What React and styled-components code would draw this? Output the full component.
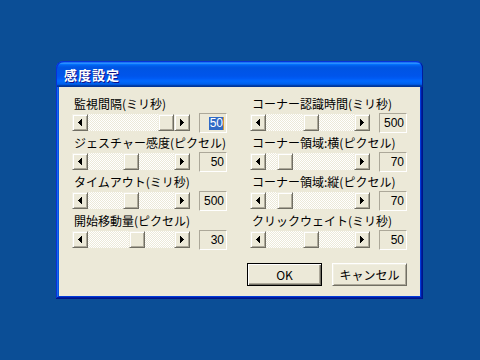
import styled, { createGlobalStyle } from 'styled-components';

const GlobalStyle = createGlobalStyle`
  html, body { margin: 0; padding: 0; }
  body {
    background: #0b4e96;
    font-family: "Noto Sans CJK JP", "Noto Sans", sans-serif;
  }
`;

const Desktop = styled.div`
  width: 480px;
  height: 360px;
  box-sizing: border-box;
  padding: 61px 0 0 56px;
`;

const Window = styled.div`
  width: 367px;
  height: 238px;
  display: flex;
  flex-direction: column;
  box-sizing: border-box;
  padding: 0 3px 3px;
  background: #0054e3;
  border-radius: 8px 8px 0 0;
  box-shadow: inset -1px -1px #00138c, inset 1px 1px #0831d9,
    inset -2px -2px #001ea0, inset 2px 2px #166aee,
    inset -3px -3px #003bda, inset 3px 3px #0855dd;
`;

const TitleBar = styled.div`
  height: 26px;
  margin: 0 -3px;
  box-sizing: border-box;
  display: flex;
  align-items: center;
  padding: 0 0 1px 7px;
  border-radius: 8px 7px 0 0;
  border-top: 1px solid #0831d9;
  border-left: 1px solid #0831d9;
  border-right: 1px solid #001ea0;
  background: linear-gradient(
    to bottom,
    #0058ee 0%, #3593ff 4%, #288eff 6%, #127dff 8%, #036ffc 10%,
    #0262ee 14%, #0057e5 20%, #0054e3 24%, #0055eb 56%, #005bf5 66%,
    #026afe 76%, #0062ef 86%, #0052d6 92%, #0040ab 94%, #003092 100%
  );
  color: #fff;
  font-size: 13px;
  font-weight: bold;
  letter-spacing: 1px;
  text-shadow: 1px 1px #0f1089;
`;

const Client = styled.div`
  flex: 1;
  background: #ece9d8;
  box-sizing: border-box;
  padding: 9px 13px 0 13px;
  display: grid;
  grid-template-columns: 155px 157px;
  column-gap: 23px;
  row-gap: 2px;
  align-content: start;
`;

const Field = styled.div`
  display: flex;
  flex-direction: column;
`;

const Label = styled.div`
  height: 16px;
  line-height: 16px;
  margin-bottom: 1px;
  padding-left: 2px;
  font-size: 12px;
  color: #000;
  white-space: nowrap;
`;

const Controls = styled.div`
  height: 20px;
  display: flex;
  align-items: flex-start;
  gap: 9px;
`;

const ScrollBar = styled.div`
  flex: 1;
  height: 17px;
  margin-top: 1px;
  display: flex;
`;

const raised = `
  box-sizing: border-box;
  border: 1px solid;
  border-color: #f1efe2 #716f64 #716f64 #f1efe2;
  box-shadow: inset 1px 1px #fff, inset -1px -1px #aca899;
  background: #ece9d8;
`;

const ArrowButton = styled.div`
  ${raised}
  width: 16px;
  height: 17px;
  display: flex;
  align-items: center;
  justify-content: center;
`;

const Track = styled.div`
  flex: 1;
  display: flex;
  background: repeating-conic-gradient(#ffffff 0 25%, #ece9d8 0 50%) 0 0 / 2px 2px;
`;

const Thumb = styled.div`
  ${raised}
  width: 16px;
  height: 17px;
  margin-left: ${(p) => p.$pos}px;
`;

const ValueBox = styled.div`
  width: 28px;
  height: 20px;
  box-sizing: border-box;
  border: 1px solid;
  border-color: #aca899 #fff #fff #aca899;
  display: flex;
  align-items: center;
  justify-content: flex-end;
  padding-right: 2px;
  font-family: "Liberation Sans", Arial, sans-serif;
  font-size: 12px;
  color: #000;
`;

const Selected = styled.span`
  background: #316ac5;
  color: #fff;
  line-height: 13px;
  padding: 0 0 0 1px;
  border-right: 1px solid #d49a30;
`;

const ButtonRow = styled.div`
  grid-column: 1 / -1;
  display: flex;
  justify-content: flex-end;
  gap: 10px;
  margin-top: 11px;
`;

const Button = styled.div`
  width: 75px;
  height: 23px;
  box-sizing: border-box;
  display: flex;
  align-items: center;
  justify-content: center;
  font-size: 12px;
  color: #000;
  background: #ece9d8;
  border: 1px solid;
  border-color: ${(p) => (p.$default ? '#000' : '#fff #716f64 #716f64 #fff')};
  box-shadow: ${(p) =>
    p.$default
      ? 'inset 1px 1px #fff, inset -1px -1px #716f64, inset -2px -2px #aca899'
      : 'inset 1px 1px #f1efe2, inset -1px -1px #aca899'};
`;

const Arrow = ({ dir }) => (
  <svg width="4" height="7" viewBox="0 0 4 7" shapeRendering="crispEdges">
    {dir === 'left' ? (
      <polygon points="4,0 4,7 0,3.5" fill="#000" />
    ) : (
      <polygon points="0,0 0,7 4,3.5" fill="#000" />
    )}
  </svg>
);

const fields = [
  { label: '監視間隔(ミリ秒)', value: '50', pos: 70, selected: true },
  { label: 'コーナー認識時間(ミリ秒)', value: '500', pos: 37 },
  { label: 'ジェスチャー感度(ピクセル)', value: '50', pos: 35 },
  { label: 'コーナー領域:横(ピクセル)', value: '70', pos: 11 },
  { label: 'タイムアウト(ミリ秒)', value: '500', pos: 35 },
  { label: 'コーナー領域:縦(ピクセル)', value: '70', pos: 11 },
  { label: '開始移動量(ピクセル)', value: '30', pos: 41 },
  { label: 'クリックウェイト(ミリ秒)', value: '50', pos: 37 },
];

const App = () => {
  return (
    <Desktop>
      <GlobalStyle />
      <Window>
        <TitleBar>感度設定</TitleBar>
        <Client>
          {fields.map((f) => (
            <Field key={f.label}>
              <Label>{f.label}</Label>
              <Controls>
                <ScrollBar>
                  <ArrowButton><Arrow dir="left" /></ArrowButton>
                  <Track>
                    <Thumb $pos={f.pos} />
                  </Track>
                  <ArrowButton><Arrow dir="right" /></ArrowButton>
                </ScrollBar>
                <ValueBox>
                  {f.selected ? <Selected>{f.value}</Selected> : f.value}
                </ValueBox>
              </Controls>
            </Field>
          ))}
          <ButtonRow>
            <Button $default>OK</Button>
            <Button>キャンセル</Button>
          </ButtonRow>
        </Client>
      </Window>
    </Desktop>
  );
};

export default App;
